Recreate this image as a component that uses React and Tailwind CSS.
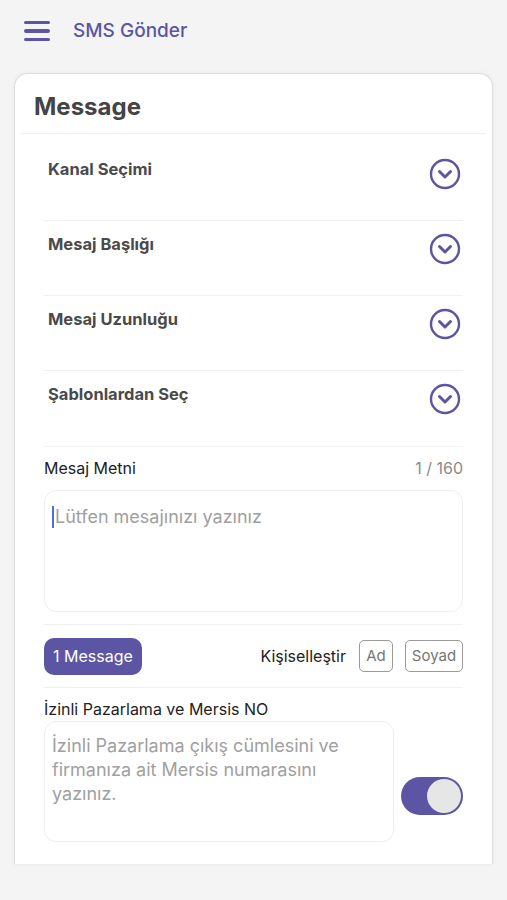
import React from 'react';

const purple = '#5b55a3';

function ChevronCircle() {
  return (
    <svg width="32" height="32" viewBox="0 0 32 32" fill="none">
      <circle cx="16" cy="16" r="14" stroke={purple} strokeWidth="2.4" />
      <path d="M10.5 13.5 L16 19 L21.5 13.5" stroke={purple} strokeWidth="3" strokeLinecap="round" strokeLinejoin="round" />
    </svg>
  );
}

function Row({ label, first, last }) {
  return (
    <div className={`flex justify-between h-[75px] ${first ? 'pt-[12px] h-[87px]' : ''} ${last ? '' : 'border-b border-[#f0f0f0]'}`}>
      <div className="pl-[4px] pt-[14px] text-[16.5px] font-bold text-[#4a4a4a] leading-[18px]">{label}</div>
      <div className="mt-[12px] mr-[2px]">
        <ChevronCircle />
      </div>
    </div>
  );
}

export default function App() {
  return (
    <div className="w-[507px] h-[900px] bg-[#f4f4f4] overflow-hidden" style={{ fontFamily: 'Inter, "Liberation Sans", sans-serif' }}>
      <div className="flex items-center h-[62px] pl-[24px]">
        <div className="flex flex-col gap-[5px] w-[26px]">
          <div className="h-[3.5px] rounded-full bg-[#5b55a3]" />
          <div className="h-[3.5px] rounded-full bg-[#5b55a3]" />
          <div className="h-[3.5px] rounded-full bg-[#5b55a3]" />
        </div>
        <div className="ml-[23px] text-[19px] font-medium text-[#5b55a3]">SMS Gönder</div>
      </div>

      <div className="mx-[14px] mt-[11px] h-[791px] bg-white rounded-t-[14px] border-x border-t border-[#dedede] shadow-[0_0_4px_rgba(0,0,0,0.06)] overflow-hidden">
        <div className="mx-[6px] h-[60px] border-b border-[#f0f0f0] pl-[13px] pt-[6px] flex items-center">
          <div className="text-[24px] font-bold text-[#444]">Message</div>
        </div>

        <div className="px-[29px]">
          <Row label="Kanal Seçimi" first />
          <Row label="Mesaj Başlığı" />
          <Row label="Mesaj Uzunluğu" />
          <Row label="Şablonlardan Seç" last />
          <div className="border-b border-[#f4f4f4]" />

          <div className="flex justify-between items-center mt-[11px] h-[20px]">
            <div className="text-[16px] text-[#222]">Mesaj Metni</div>
            <div className="text-[16px] text-[#8a8a8a]">1 / 160</div>
          </div>
          <div className="mt-[12px] h-[122px] border border-[#eeeeee] rounded-[12px] px-[7px] pt-[12px] relative">
            <div className="flex items-center text-[18px] text-[#a0a0a0]">
              <span className="w-[2px] h-[22px] bg-[#4a6fe0] mr-[1px]" />
              Lütfen mesajınızı yazınız
            </div>
          </div>

          <div className="mt-[12px] border-b border-[#f0f0f0]" />

          <div className="flex items-center justify-between h-[62px]">
            <div className="h-[37px] px-[9px] rounded-[10px] bg-[#5b55a3] text-white text-[16px] flex items-center">1 Message</div>
            <div className="flex items-center">
              <div className="text-[16px] text-[#222] mr-[13px]">Kişiselleştir</div>
              <div className="h-[32px] w-[34px] border border-[#9a9a9a] rounded-[5px] text-[15px] text-[#777] flex items-center justify-center">Ad</div>
              <div className="ml-[12px] h-[32px] w-[58px] border border-[#9a9a9a] rounded-[5px] text-[15px] text-[#777] flex items-center justify-center">Soyad</div>
            </div>
          </div>
          <div className="border-b border-[#f0f0f0]" />

          <div className="mt-[11px] text-[16px] text-[#222] leading-[20px]">İzinli Pazarlama ve Mersis NO</div>
          <div className="flex items-start gap-[7px] mt-[2px]">
            <div className="w-[351px] h-[121px] border border-[#eeeeee] rounded-[12px] pl-[7px] pr-[44px] pt-[12px] text-[18px] leading-[24px] text-[#a0a0a0]">
              İzinli Pazarlama çıkış cümlesini ve firmanıza ait Mersis numarasını yazınız.
            </div>
            <div className="mt-[56px] w-[62px] h-[38px] rounded-full bg-[#5b55a3] flex items-center justify-end pr-[2px]">
              <div className="w-[34px] h-[34px] rounded-full bg-[#e6e6e6]" />
            </div>
          </div>
        </div>
      </div>
    </div>
  );
}
